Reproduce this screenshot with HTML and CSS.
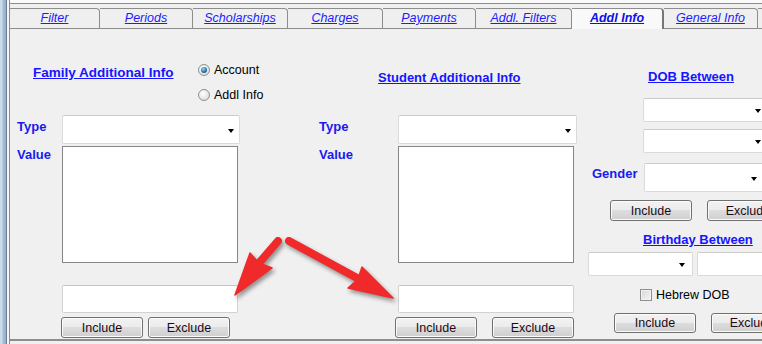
FILE: index.html
```html
<!DOCTYPE html>
<html lang="en">
<head>
    <meta charset="UTF-8">
    <meta name="viewport" content="width=device-width, initial-scale=1.0">
    <title>Addl Info</title>
    <link rel="stylesheet" href="styles.css">
</head>
<body>
<div class="window">
    <div class="frame"></div>
    <div class="main">
        <div class="inner">
            <div class="top-strip"></div>
            <div class="tabs">
                <a class="tab" style="width:90px">Filter</a>
                <a class="tab" style="width:93px">Periods</a>
                <a class="tab" style="width:95px">Scholarships</a>
                <a class="tab" style="width:95px">Charges</a>
                <a class="tab" style="width:93px">Payments</a>
                <a class="tab" style="width:96px">Addl. Filters</a>
                <a class="tab active" style="width:92px">Addl Info</a>
                <a class="tab" style="width:94px">General Info</a>
                <a class="tab" style="width:60px"></a>
            </div>
            <div class="panel">
                <!-- family column -->
                <div class="col col-family">
                    <div class="fam-head">
                        <a class="section-title fam-title">Family Additional Info</a>
                        <div class="radios">
                            <div class="radio-row"><span class="radio checked"></span>Account</div>
                            <div class="radio-row"><span class="radio"></span>Addl Info</div>
                        </div>
                    </div>
                    <div class="form form-family">
                        <div class="lbl lbl-type">Type</div>
                        <div class="combo combo-type"><span class="caret"></span></div>
                        <div class="lbl lbl-value">Value</div>
                        <div class="listbox"></div>
                        <div></div>
                        <div class="textbox"></div>
                        <div></div>
                        <div class="btn-row"><button class="btn">Include</button><button class="btn">Exclude</button></div>
                    </div>
                </div>

                <!-- student column -->
                <div class="col col-student">
                    <div class="stu-head">
                        <a class="section-title">Student Additional Info</a>
                    </div>
                    <div class="form form-student">
                        <div class="lbl lbl-type">Type</div>
                        <div class="combo combo-type wide"><span class="caret"></span></div>
                        <div class="lbl lbl-value">Value</div>
                        <div class="listbox"></div>
                        <div></div>
                        <div class="textbox"></div>
                        <div></div>
                        <div class="btn-row"><button class="btn">Include</button><button class="btn">Exclude</button></div>
                    </div>
                </div>

                <!-- dob column -->
                <div class="col col-dob">
                    <a class="section-title dob-title">DOB Between</a>
                    <div class="combo dob-combo first"><span class="caret"></span></div>
                    <div class="combo dob-combo"><span class="caret"></span></div>
                    <div class="gender-row">
                        <div class="lbl gender-lbl">Gender</div>
                        <div class="combo gender-combo"><span class="caret"></span></div>
                    </div>
                    <div class="btn-row dob-btns"><button class="btn">Include</button><button class="btn">Exclude</button></div>
                    <a class="section-title bday-title">Birthday Between</a>
                    <div class="bday-row">
                        <div class="combo bday-combo"><span class="caret"></span></div>
                        <div class="combo bday-combo"><span class="caret"></span></div>
                    </div>
                    <div class="check-row"><span class="check"></span>Hebrew DOB</div>
                    <div class="btn-row bday-btns"><button class="btn">Include</button><button class="btn">Exclude</button></div>
                </div>
            </div>
        </div>
    </div>

    <!-- annotation arrows drawn over the form -->
    <svg class="arrows" width="762" height="344" viewBox="0 0 762 344">
        <g fill="#f02a2a" stroke="#f02a2a" stroke-linejoin="round">
            <line x1="278" y1="241" x2="259" y2="263" stroke-width="8" stroke-linecap="round"/>
            <polygon points="235,295 250,253 259,263 272,268" stroke-width="1.5"/>
            <line x1="289" y1="241" x2="357" y2="278" stroke-width="8" stroke-linecap="round"/>
            <polygon points="393,298 362,267 358,279 348,288" stroke-width="1.5"/>
        </g>
    </svg>
</div>
</body>
</html>
```

FILE: styles.css
```css
body {
    margin: 0;
    background-color: #f0f0f0;
    font-family: "Liberation Sans", Arial, sans-serif;
    font-size: 12px;
    color: #000;
}

.window {
    position: relative;
    display: flex;
    width: 762px;
    height: 344px;
    overflow: hidden;
}

.frame {
    flex: none;
    width: 6px;
    border-right: 1px solid #6d7f96;
    background: linear-gradient(90deg, #cbdaeb 0, #cbdaeb 2px, #a8bdd6 3px, #97adc9 6px);
}

.main {
    flex: 1;
    min-width: 0;
    border-left: 2px solid #f6f6f6;
}

.inner {
    height: 100%;
    border-left: 1px solid #8d8d8d;
}

.top-strip {
    height: 3px;
    background-color: #fafafa;
    border-bottom: 1px solid #8d8d8d;
}

/* tabs */
.tabs {
    display: flex;
    align-items: flex-end;
    margin-top: 4px;
    height: 20px;
}

.tab {
    flex: none;
    box-sizing: border-box;
    height: 20px;
    border-top: 1px solid #8d8d8d;
    border-right: 1px solid #8d8d8d;
    border-top-right-radius: 4px;
    background-color: #efefef;
    color: #1c1cff;
    font-size: 12.5px;
    font-style: italic;
    text-decoration: underline;
    text-align: center;
    line-height: 19px;
}

.tab.active {
    position: relative;
    z-index: 1;
    height: 21px;
    margin-bottom: -1px;
    background-color: #f9f9f9;
    border-right: 2px solid #777;
    font-weight: bold;
    color: #1010e8;
}

/* panel */
.panel {
    display: flex;
    height: 310px;
    border-top: 1px solid #8d8d8d;
    border-bottom: 2px solid #8d8d8d;
}

.col-family {
    flex: none;
    width: 290px;
}

.col-student {
    flex: none;
    width: 280px;
}

.col-dob {
    flex: 1;
    min-width: 0;
    display: flex;
    flex-direction: column;
    align-items: flex-start;
}

.section-title {
    display: block;
    font-size: 13px;
    font-weight: bold;
    line-height: 16px;
    color: #1515ff;
    text-decoration: underline;
    white-space: nowrap;
}

.fam-head {
    display: flex;
    box-sizing: border-box;
    height: 86px;
    padding: 33px 0 0 23px;
}

.fam-title {
    width: 165px;
    margin-top: 3px;
    font-size: 13.5px;
}

.radios {
    display: flex;
    flex-direction: column;
    gap: 9px;
}

.radio-row {
    display: flex;
    align-items: center;
    gap: 4px;
    height: 16px;
    font-size: 12.5px;
}

.radio {
    display: flex;
    align-items: center;
    justify-content: center;
    box-sizing: border-box;
    width: 12px;
    height: 12px;
    border: 1px solid #8e8f8f;
    border-radius: 50%;
    background: radial-gradient(circle at 40% 35%, #ffffff, #d4d4d4);
}

.radio.checked::after {
    content: "";
    width: 6px;
    height: 6px;
    border-radius: 50%;
    background: radial-gradient(circle at 40% 35%, #9bd8f6, #1f6e9c 60%, #0e3c5c);
}

.stu-head {
    box-sizing: border-box;
    height: 86px;
    padding: 41px 0 0 78px;
}

/* label + control grid */
.form {
    display: grid;
    align-items: start;
}

.form-family {
    grid-template-columns: 45px auto;
    padding-left: 7px;
}

.form-student {
    grid-template-columns: 79px auto;
    padding-left: 19px;
}

.lbl {
    font-size: 13px;
    font-weight: bold;
    line-height: 16px;
    color: #1a1aee;
}

.lbl-type {
    margin-top: 4px;
}

.lbl-value {
    margin-top: 3px;
}

.combo {
    display: flex;
    align-items: center;
    justify-content: flex-end;
    box-sizing: border-box;
    height: 24px;
    padding: 2px 5px 0 0;
    background-color: #fff;
    border: 1px solid #dadada;
    border-top-color: #cbcbcb;
    border-radius: 2px;
}

.caret {
    width: 0;
    height: 0;
    border-left: 3.5px solid transparent;
    border-right: 3.5px solid transparent;
    border-top: 4px solid #000;
}

.combo-type {
    width: 178px;
    height: 29px;
}

.combo-type.wide {
    width: 179px;
}

.listbox {
    box-sizing: border-box;
    width: 176px;
    height: 117px;
    margin-top: 2px;
    background-color: #fff;
    border: 1px solid #858585;
}

.textbox {
    box-sizing: border-box;
    width: 176px;
    height: 28px;
    margin-top: 22px;
    background-color: #fff;
    border: 1px solid #d2d2d2;
    border-top-color: #c4c4c4;
    border-radius: 2px;
}

.btn-row {
    display: flex;
    margin-top: 4px;
}

.form-family .btn-row {
    gap: 5px;
    margin-left: -1px;
}

.form-student .btn-row {
    gap: 15px;
    margin-left: -3px;
}

.btn {
    flex: none;
    box-sizing: border-box;
    width: 82px;
    height: 21px;
    padding: 0;
    border: 1px solid #707070;
    border-radius: 3px;
    background: linear-gradient(#f2f2f2 0%, #ebebeb 50%, #dddddd 50%, #cfcfcf 100%);
    box-shadow: inset 0 0 0 1px #fbfbfb;
    font-family: "Liberation Sans", Arial, sans-serif;
    font-size: 12.5px;
    color: #1a0a1a;
    line-height: 18px;
}

/* dob column */
.dob-title {
    margin: 40px 0 0 68px;
}

.dob-combo {
    flex: none;
    width: 124px;
    margin: 7px 0 0 63px;
}

.dob-combo.first {
    margin-top: 13px;
}

.gender-row {
    display: flex;
    margin-top: 10px;
    padding-left: 12px;
}

.gender-lbl {
    width: 52px;
    margin-top: 3px;
}

.gender-combo {
    flex: none;
    width: 122px;
    height: 29px;
    padding-right: 8px;
}

.dob-btns {
    gap: 15px;
    margin: 8px 0 0 30px;
}

.bday-title {
    margin: 11px 0 0 63px;
}

.bday-row {
    display: flex;
    gap: 4px;
    margin: 4px 0 0 8px;
}

.bday-combo {
    flex: none;
    width: 105px;
    padding-right: 7px;
}

.check-row {
    display: flex;
    align-items: center;
    gap: 4px;
    height: 13px;
    margin: 12px 0 0 60px;
    font-size: 12.5px;
}

.check {
    box-sizing: border-box;
    width: 12px;
    height: 12px;
    border: 1px solid #8e8f8f;
    background: linear-gradient(135deg, #d6d6d6, #f7f7f7);
    box-shadow: inset 0 0 0 1px #f2f2f2;
}

.bday-btns {
    gap: 15px;
    margin: 12px 0 0 34px;
}

.bday-btns .btn {
    height: 20px;
    line-height: 17px;
}

.arrows {
    position: absolute;
    top: 0;
    left: 0;
    pointer-events: none;
    filter: drop-shadow(2px 3px 2px rgba(0, 0, 0, 0.4));
}
```
